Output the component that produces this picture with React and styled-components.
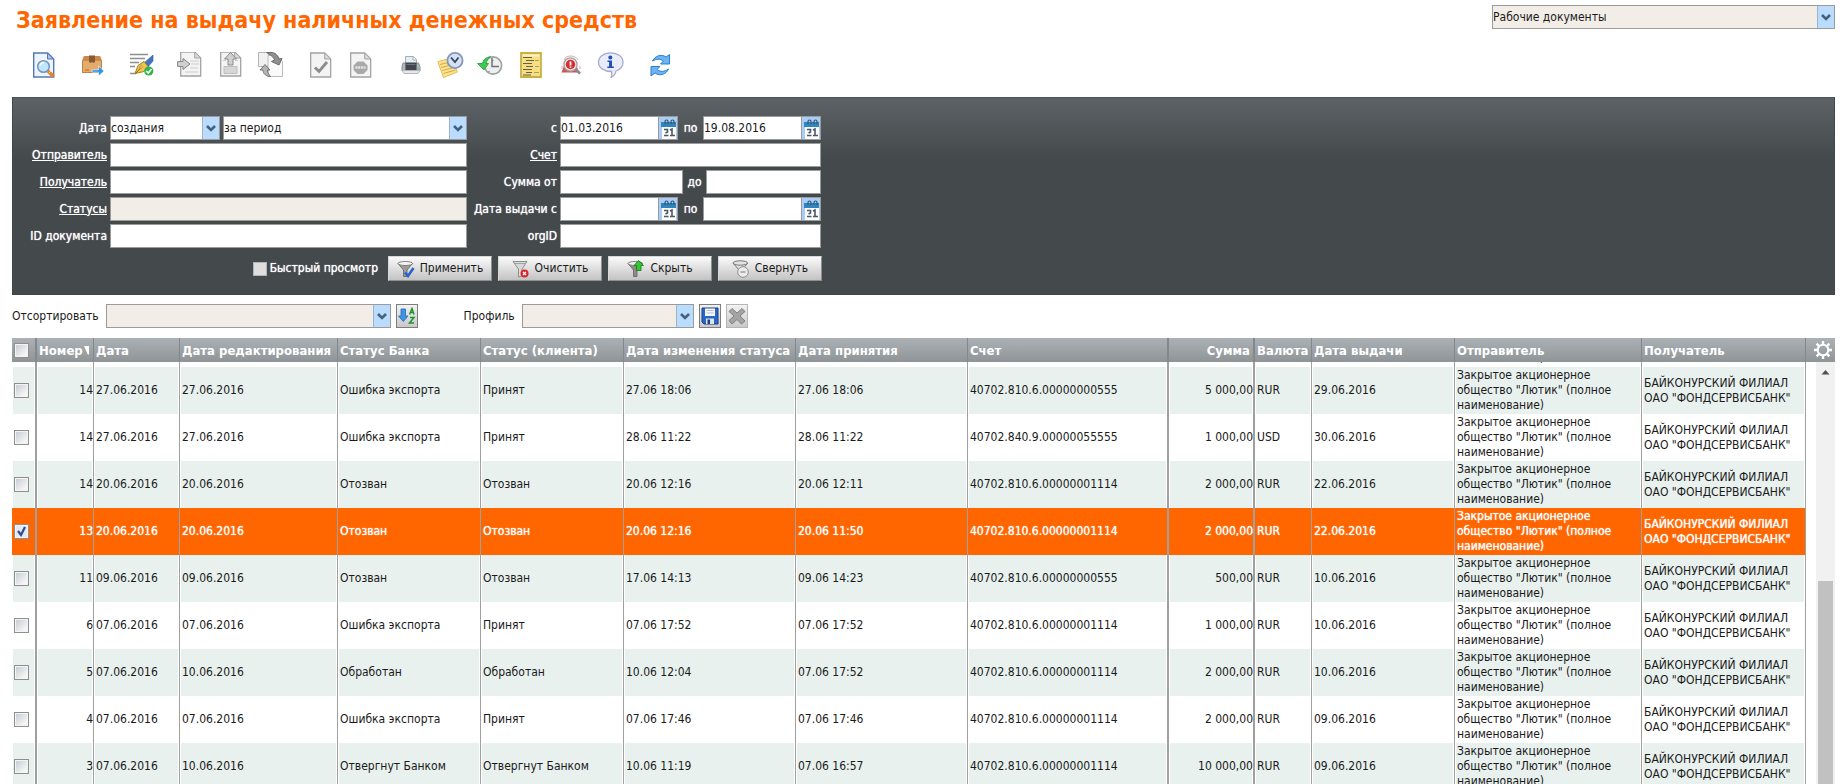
import React, {useState, useRef, useLayoutEffect} from 'react'
import styled, {createGlobalStyle} from 'styled-components';

const columns = [
    {title: 'Номер', key: 'num', width: 57, right: true, sorted: true},
    {title: 'Дата', key: 'date', width: 86},
    {title: 'Дата редактирования', key: 'edited', width: 158},
    {title: 'Статус Банка', key: 'bank', width: 143},
    {title: 'Статус (клиента)', key: 'client', width: 143},
    {title: 'Дата изменения статуса', key: 'changed', width: 172},
    {title: 'Дата принятия', key: 'accepted', width: 172},
    {title: 'Счет', key: 'account', width: 201, wide: true},
    {title: 'Сумма', key: 'sum', width: 86, right: true, wide: true},
    {title: 'Валюта', key: 'currency', width: 57},
    {title: 'Дата выдачи', key: 'issued', width: 143},
    {title: 'Отправитель', key: 'sender', width: 187},
    {title: 'Получатель', key: 'receiver', width: 164},
];

const sender = 'Закрытое акционерное общество "Лютик" (полное наименование)';
const receiver = 'БАЙКОНУРСКИЙ ФИЛИАЛ ОАО "ФОНДСЕРВИСБАНК"';

const documents = [
    ['', '', '', '', '', '', '', '', '', '', '', sender, ''],
    ['14', '27.06.2016', '27.06.2016', 'Ошибка экспорта', 'Принят', '27.06 18:06', '27.06 18:06', '40702.810.6.00000000555', '5 000,00', 'RUR', '29.06.2016', sender, receiver],
    ['14', '27.06.2016', '27.06.2016', 'Ошибка экспорта', 'Принят', '28.06 11:22', '28.06 11:22', '40702.840.9.00000055555', '1 000,00', 'USD', '30.06.2016', sender, receiver],
    ['14', '20.06.2016', '20.06.2016', 'Отозван', 'Отозван', '20.06 12:16', '20.06 12:11', '40702.810.6.00000001114', '2 000,00', 'RUR', '22.06.2016', sender, receiver],
    ['13', '20.06.2016', '20.06.2016', 'Отозван', 'Отозван', '20.06 12:16', '20.06 11:50', '40702.810.6.00000001114', '2 000,00', 'RUR', '22.06.2016', sender, receiver],
    ['11', '09.06.2016', '09.06.2016', 'Отозван', 'Отозван', '17.06 14:13', '09.06 14:23', '40702.810.6.00000000555', '500,00', 'RUR', '10.06.2016', sender, receiver],
    ['6', '07.06.2016', '07.06.2016', 'Ошибка экспорта', 'Принят', '07.06 17:52', '07.06 17:52', '40702.810.6.00000001114', '1 000,00', 'RUR', '10.06.2016', sender, receiver],
    ['5', '07.06.2016', '10.06.2016', 'Обработан', 'Обработан', '10.06 12:04', '07.06 17:52', '40702.810.6.00000001114', '2 000,00', 'RUR', '10.06.2016', sender, receiver],
    ['4', '07.06.2016', '07.06.2016', 'Ошибка экспорта', 'Принят', '07.06 17:46', '07.06 17:46', '40702.810.6.00000001114', '2 000,00', 'RUR', '09.06.2016', sender, receiver],
    ['3', '07.06.2016', '10.06.2016', 'Отвергнут Банком', 'Отвергнут Банком', '10.06 11:19', '07.06 16:57', '40702.810.6.00000001114', '10 000,00', 'RUR', '09.06.2016', sender, receiver],
];

/* icons */

const Page = ({fill = '#f4f4f4', stroke = '#a3a3a3', x = 3}) => (
    <g transform={`translate(${x} 0)`}>
        <path d="M.7 1h14l6 6v18H.7z" fill={fill} stroke={stroke} strokeWidth="1.3"/>
        <path d="M14.7 1v6h6z" fill="#dcdcdc" stroke={stroke}/>
    </g>
);

const PreviewArt = () => (
    <g>
        <path d="M6.7 1h14l6 6v18h-20z" fill="#eef4fd" stroke="#5578b0" strokeWidth="1.4"/>
        <path d="M20.5 1v6h6z" fill="#a9c4ee" stroke="#5578b0"/>
        <path d="M21 19l5.500 5.500" stroke="#e8812c" strokeWidth="3.500"/>
        <path d="M22 21l2-2" stroke="#fbe3a0" strokeWidth="1"/>
        <circle cx="16.500" cy="14.500" r="5.800" fill="#bfe6fa" stroke="#7196bd" strokeWidth="1.500"/>
        <path d="M13 13.500a4 4 0 0 1 4-3" stroke="#fff" strokeWidth="1.500" fill="none"/>
    </g>
);

const BoxArt = () => (
    <g>
        <path d="M7 4h16l2 5v12H5V9z" fill="#e5ab6b"/>
        <path d="M7 4h16l2 5H5z" fill="#c98a4b"/>
        <path d="M5.500 9v11.500h19V9" fill="none" stroke="#bd8148"/>
        <path d="M12 3.500h6V10l-1.500 1-1.500-1-1.500 1L12 10z" fill="#8a5a30"/>
        <path d="M8 18h4" stroke="#a8703a"/>
        <path d="M15 17.800h6.500v-3.800l5.500 5-5.500 5V20.200H15z" fill="#2f95e3" stroke="#fff" strokeWidth=".6"/>
    </g>
);

const SignArt = () => (
    <g>
        <path d="M3 2.500h18M3 6.500h15M3 10.500h9M3 14.500h5M3 21.500h6" stroke="#8e8e8e" strokeWidth="1.300"/>
        <path d="M17 11L26 3v6l-6 7z" fill="#4573c4" stroke="#34579c" strokeWidth=".6"/>
        <path d="M8 21.500l3-8 6-4 4 5-4 5z" fill="#f3c34b" stroke="#a8821d"/>
        <path d="M8.500 21.500l5.500-6" stroke="#8a6914"/>
        <circle cx="14" cy="15" r="1.200" fill="#fff6cf" stroke="#8a6914" strokeWidth=".6"/>
        <circle cx="21.800" cy="19" r="4.600" fill="#2fb64a"/>
        <path d="M19.200 19l2 2 3.400-4" stroke="#fff" strokeWidth="1.600" fill="none"/>
    </g>
);

const ImportArt = () => (
    <g>
        <g transform="translate(0 -1)"><Page x={3}/></g>
        <path d="M13 9h9M14 12h8M13 16h8M8 20h13" stroke="#cdcdcd"/>
        <path d="M.6 9.500h5.400V6.500L13 12l-7 5.500v-3H.6z" fill="#cfcfcf" stroke="#878787"/>
    </g>
);

const ExportArt = () => (
    <g>
        <g transform="translate(0 -1)"><Page x={3}/></g>
        <path d="M7 14.500h13v7H7z" fill="#d6d6d6" stroke="#bdbdbd"/>
        <path d="M6 8.500h3M18 8.500h3" stroke="#cdcdcd"/>
        <path d="M13.500.500l6 6.500h-3.500v6h-5V7H7.500z" fill="#d0d0d0" stroke="#8a8a8a"/>
    </g>
);

const ExchangeArt = () => (
    <g>
        <path d="M1.500.500h10v14h-10z" fill="#f1f1f1" stroke="#b5b5b5"/>
        <path d="M11 3.500h9l5.500 6v15H11z" fill="#fafafa" stroke="#bcbcbc"/>
        <path d="M9.500.500h6c4 1 6 4 6 6.500l3.500-.500-3 6.500-7.500-3.500 3-1.500C17 5 13 3 9.500.500z" fill="#8f8f8f" stroke="#6c6c6c"/>
        <path d="M8 12.500l5 5.500h-2.500c0 3 1.500 4.500 3 6.500-4 0-7.500-2.500-7.500-6.500H3z" fill="#b4b4b4" stroke="#737373"/>
    </g>
);

const CheckPageArt = () => (
    <g>
        <Page/>
        <path d="M8 15.500l4 4 8-9.500" fill="none" stroke="#8b8b8b" strokeWidth="2.800"/>
    </g>
);

const StopPageArt = () => (
    <g>
        <Page/>
        <path d="M10.500 9.500h6l4 4v4.500l-4 4h-6l-4-4v-4.500z" fill="#a9a9a9"/>
        <path d="M8.500 15.500h10" stroke="#e6e6e6" strokeWidth="2.500" strokeDasharray="2 .7"/>
    </g>
);

const PrintArt = () => (
    <g>
        <path d="M8.500 4.500h8l3 3V12h-11z" fill="#e3eff2" stroke="#9fb0b6"/>
        <path d="M16 4.500v3.500h3.500" fill="#fff" stroke="#9fb0b6"/>
        <path d="M6 11h3v8H5v-4.500zM19 11h2.500l1.500 3.500V19h-4z" fill="#b3b6bd" stroke="#8b8e95"/>
        <path d="M8.500 10.500h11V18h-11z" fill="#43464d"/>
        <path d="M9.500 12.500h9" stroke="#6f727a"/>
        <path d="M5 18.500h18l-2 3H7z" fill="#e4e6e9" stroke="#b4b7bb"/>
        <path d="M20 16.500h2" stroke="#5ccf8a" strokeWidth="1.500"/>
    </g>
);

const ScheduleArt = () => (
    <g>
        <path d="M.8 9.500l14-3.500 5.500 14L6.500 25.500z" fill="#fde48d" stroke="#e3bd52"/>
        <path d="M3 12.500l12-3M4 15.500l12-3M5.200 18.500l12-3M6.500 21.500l12-3.500" stroke="#d0a94a"/>
        <circle cx="18" cy="8.500" r="7.600" fill="#d3e2f6" stroke="#8695b8" strokeWidth="1.800"/>
        <path d="M14 5.500l4 4.500 3.500-4.500" fill="none" stroke="#3c4256" strokeWidth="1.800"/>
    </g>
);

const HistoryArt = () => (
    <g>
        <circle cx="16" cy="13.500" r="8.600" fill="#eef0f0" stroke="#9aa1a3" strokeWidth="1.600"/>
        <path d="M15 6v8.500h7" fill="none" stroke="#6e7476" strokeWidth="1.500"/>
        <path d="M16 8v1M12 19v1" stroke="#6e7476"/>
        <path d="M13.500 4.500C9 5.500 6 8 5.500 11.500H.5l6.500 6.500 4.500-6.500H9c.5-2.500 2-4.500 4.500-7z" fill="#3fc953" stroke="#1f9a37" strokeWidth=".8"/>
    </g>
);

const JournalArt = () => (
    <g>
        <path d="M4 1h20v24H4z" fill="#f4df86" stroke="#cbb142" strokeWidth="1.800"/>
        <path d="M6 3.500h16" stroke="#fbf2c4" strokeWidth="2"/>
        <path d="M6 5.500h9M9 8.500h8M6 11.500h9M9 14.500h7M6 17.500h9M9 20.500h6M6 23h8" stroke="#6b6034" strokeWidth="1.100"/>
        <path d="M18 8.500h4M18 14.500h4M17 20.500h5" stroke="#b39f58"/>
    </g>
);

const AlertArt = () => (
    <g>
        <path d="M7 8c1-3 4-4 7-4s6 2 7 4M5 17v-3M23 17v-3" stroke="#c9b1b1" fill="none"/>
        <path d="M4.500 20.500l3-8h12l2 8z" fill="#c95858"/>
        <path d="M19 17.500l4 4" stroke="#8a8a8a" strokeWidth="2.600"/>
        <circle cx="13.500" cy="12.500" r="6.600" fill="#f4e4e4" stroke="#a9a0a4" strokeWidth="1.300"/>
        <circle cx="13.500" cy="12.500" r="4.700" fill="#d22f2f"/>
        <path d="M13.500 9.500v4M13.500 14.500v1.300" stroke="#fff" strokeWidth="1.800"/>
    </g>
);

const InfoArt = () => (
    <g>
        <path d="M13.500.800C21 .800 26 5 26 10.500c0 4-3 7-7 8.500-.5 3-2 5-5 6.500 1-2 1-4 .5-6C7 19.500 1.500 15.500 1.500 10.500 1.500 5 6.500.800 13.500.800z" fill="#e9ecfb" stroke="#a9aacd" strokeWidth="1.300"/>
        <circle cx="13.300" cy="5.500" r="2" fill="#1f4fb8"/>
        <path d="M10.500 8.500h4.500v6h1.800V16h-6.500v-1.500h1.800V10h-1.600z" fill="#1f4fb8"/>
    </g>
);

const RefreshArt = () => (
    <g>
        <path d="M5.500 9C8 4 14 1.500 19 5l3.500-2.500V12h-9l3-3C13 6.500 9 7 5.500 9z" fill="#6cb4f2" stroke="#2d7fcf"/>
        <path d="M21.500 17C19 22.500 13 24.500 8 21l-4 3v-9.500h9L10 17.500c3 2.500 7.500 2.500 11.500-.5z" fill="#6cb4f2" stroke="#2d7fcf"/>
    </g>
);

const toolGroups = [
    [['Просмотр', PreviewArt]],
    [['Отправить', BoxArt]],
    [['Подписать', SignArt]],
    [['Импорт', ImportArt], ['Экспорт', ExportArt], ['Обмен', ExchangeArt]],
    [['Проверить', CheckPageArt], ['Остановить', StopPageArt]],
    [['Печать', PrintArt], ['Расписание', ScheduleArt], ['История', HistoryArt], ['Журнал', JournalArt], ['Ошибки', AlertArt], ['Информация', InfoArt]],
    [['Обновить', RefreshArt]],
];

const Funnel = ({fill = '#c9c9c9'}) => (
    <g>
        <path d="M1 3.500l5.500 6.500v6.500h3.500V10l5.500-6.500z" fill={fill} stroke="#6b6b6b" strokeWidth=".9"/>
        <ellipse cx="8.300" cy="3.500" rx="7.300" ry="2" fill="#f3f3f3" stroke="#757575" strokeWidth=".9"/>
    </g>
);

const ApplyIcon = () => (
    <svg width="18" height="18" viewBox="0 0 18 18" aria-hidden="true">
        <Funnel fill="#9c9c9c"/>
        <path d="M8 12.500l3 3.500 5.500-8" fill="none" stroke="#2a63cf" strokeWidth="2.600"/>
    </svg>
);

const ClearIcon = () => (
    <svg width="18" height="18" viewBox="0 0 18 18" aria-hidden="true">
        <path d="M1 1.500h14L10 9v7l-3.500 1V9z" fill="#d9d9d9" stroke="#8f8f8f"/>
        <path d="M3 3.500h10" stroke="#a6a6a6"/>
        <circle cx="12.500" cy="13.500" r="4" fill="#d8272f"/>
        <path d="M11 12l3 3M14 12l-3 3" stroke="#fff" strokeWidth="1.200"/>
    </svg>
);

const HideIcon = () => (
    <svg width="18" height="18" viewBox="0 0 18 18" aria-hidden="true">
        <Funnel fill="#8b8b8b"/>
        <path d="M11.500.500l5 5h-2.500v5H9.500v-5H7z" fill="#35c535" stroke="#178317" strokeWidth=".9"/>
    </svg>
);

const CollapseIcon = () => (
    <svg width="18" height="18" viewBox="0 0 18 18" aria-hidden="true">
        <path d="M1 3l6 7M15.500 3L13 6.500" stroke="#777"/>
        <ellipse cx="8.300" cy="3" rx="7.300" ry="2.200" fill="#e2e2e2" stroke="#757575"/>
        <circle cx="11" cy="12" r="5.300" fill="#ececec" stroke="#8e8e8e"/>
        <path d="M8.500 12h5" stroke="#8e8e8e" strokeWidth="1.300"/>
    </svg>
);

const CalendarIcon = () => (
    <svg width="18" height="22" viewBox="0 0 18 22" aria-hidden="true">
        <path d="M0 0h18v22H0z" fill="#a9cdf6"/>
        <path d="M3 5h14v17H3z" fill="#fdfdfd"/>
        <path d="M2 5h15v5H2z" fill="#2f86bf"/>
        <path d="M6 7V4.500a1.500 1.500 0 0 1 3 0V7M12 7V4.500a1.500 1.500 0 0 1 3 0V7" fill="none" stroke="#38536e" strokeWidth="1.200"/>
        <path d="M5 12.500h3.500V15L6.500 16M5 18.500h4.500M11 13l2-1v6M11 18.500h5" fill="none" stroke="#4d5866" strokeWidth="1.600"/>
    </svg>
);

const SortIcon = () => (
    <svg width="18" height="18" viewBox="0 0 18 18" aria-hidden="true">
        <path d="M3 2h4.500v7H10l-4.700 5.500L.500 9H3z" fill="#3f94e4" stroke="#1f66b8" strokeWidth=".8"/>
        <path d="M11.500 7.500L14 1.500l2 6M12.300 5.500h3.500M12 10.500h4l-4.500 5.500h4.500" fill="none" stroke="#1e9430" strokeWidth="1.500"/>
    </svg>
);

const SaveIcon = () => (
    <svg width="18" height="18" viewBox="0 0 18 18" aria-hidden="true">
        <path d="M1 1h16v16H3l-2-2z" fill="#2c66c4" stroke="#173f8a"/>
        <path d="M4 1.500h10V9H4z" fill="#f4f6f8"/>
        <path d="M5.500 3.500h7M5.500 6h7" stroke="#b9bfc6"/>
        <path d="M5 11.500h8V17H5z" fill="#dde3ea"/>
        <path d="M6.500 12.500h2.500V17H6.500z" fill="#1c3f80"/>
    </svg>
);

const DeleteIcon = () => (
    <svg width="18" height="18" viewBox="0 0 18 18" aria-hidden="true">
        <path d="M4 1.500L9 6l5-4.500L17 4.500 12 9l5 5-3.500 3L9 12.500 4 17l-3-3.500L6 9 1 4.500z" fill="#a3a3a3" stroke="#828282"/>
    </svg>
);

const GearIcon = () => (
    <svg width="20" height="20" viewBox="0 0 20 20" aria-hidden="true">
        <circle cx="10" cy="10" r="5.300" fill="none" stroke="#fff" strokeWidth="2"/>
        <path d="M10 1v3M10 16v3M1 10h3M16 10h3M3.600 3.600l2.200 2.200M14.200 14.200l2.200 2.200M3.600 16.400l2.200-2.200M14.200 5.800l2.200-2.200" stroke="#fff" strokeWidth="2.400"/>
    </svg>
);

const ArrowIcon = () => (
    <svg width="16" height="22" viewBox="0 0 16 22" aria-hidden="true">
        <path d="M4 9l4 4 4-4" fill="none" stroke="#44617f" strokeWidth="2.600"/>
    </svg>
);

const SortMark = () => (
    <svg width="5" height="9" viewBox="0 0 5 9" aria-hidden="true">
        <path d="M0 0h5v8l-1 1z" fill="#fff"/>
    </svg>
);

/* controls */

const Combo = ({id, label, value, muted, grow, width}) => (
    <ComboFrame $muted={muted} $grow={grow} $width={width}>
        <ComboSelect id={id} aria-label={label} defaultValue={value}>
            <option>{value}</option>
        </ComboSelect>
        <ComboArrow><ArrowIcon/></ComboArrow>
    </ComboFrame>
);

const DateField = ({id, label, value = ''}) => (
    <DateFrame>
        <DateInput id={id} aria-label={label} defaultValue={value}/>
        <CalendarButton type="button" aria-label="Календарь"><CalendarIcon/></CalendarButton>
    </DateFrame>
);

const Lookup = ({id, children}) => (
    <Label htmlFor={id}><LookupLink href="#">{children}</LookupLink></Label>
);

const Filters = () => (
    <Panel>
        <FilterGrid>
            <Label htmlFor="dateKind">Дата</Label>
            <Cell>
                <Combo id="dateKind" value="создания" width={110}/>
                <Combo label="Период" value="за период" grow/>
            </Cell>
            <Label htmlFor="dateFrom">с</Label>
            <Cell>
                <DateField id="dateFrom" value="01.03.2016"/>
                <Between htmlFor="dateTo">по</Between>
                <DateField id="dateTo" value="19.08.2016"/>
            </Cell>

            <Lookup id="sender">Отправитель</Lookup>
            <TextInput id="sender"/>
            <Lookup id="account">Счет</Lookup>
            <TextInput id="account"/>

            <Lookup id="receiver">Получатель</Lookup>
            <TextInput id="receiver"/>
            <Label htmlFor="sumFrom">Сумма от</Label>
            <Cell>
                <TextInput id="sumFrom" $width={123}/>
                <Between htmlFor="sumTo" $tight>до</Between>
                <TextInput id="sumTo"/>
            </Cell>

            <Lookup id="statuses">Статусы</Lookup>
            <TextInput id="statuses" $muted readOnly/>
            <Label htmlFor="issueFrom">Дата выдачи с</Label>
            <Cell>
                <DateField id="issueFrom"/>
                <Between htmlFor="issueTo">по</Between>
                <DateField id="issueTo"/>
            </Cell>

            <Label htmlFor="docId">ID документа</Label>
            <TextInput id="docId"/>
            <Label htmlFor="orgId">orgID</Label>
            <TextInput id="orgId"/>
        </FilterGrid>
        <Actions>
            <QuickView>
                <QuickCheck type="checkbox"/>
                Быстрый просмотр
            </QuickView>
            <ActionButton type="button"><ApplyIcon/>Применить</ActionButton>
            <ActionButton type="button"><ClearIcon/>Очистить</ActionButton>
            <ActionButton type="button"><HideIcon/>Скрыть</ActionButton>
            <ActionButton type="button"><CollapseIcon/>Свернуть</ActionButton>
        </Actions>
    </Panel>
);

const Columns = () => (
    <colgroup>
        <Col $width={25}/>
        {columns.map((c) => <Col key={c.key} $width={c.width}/>)}
    </colgroup>
);

const Documents = () => {
    const [checked, setChecked] = useState({4: true});
    const scroller = useRef(null);

    const toggle = (i) => {
        setChecked({...checked, [i]: !checked[i]});
    }

    useLayoutEffect(() => {
        scroller.current.scrollTop = 42;
    },[]);

    return (
        <TableArea>
            <Grid>
                <Table>
                    <Columns/>
                    <thead>
                        <tr>
                            <HeadCell $wide><Check type="checkbox" aria-label="Выбрать все"/></HeadCell>
                            {columns.map((c) => (
                                <HeadCell key={c.key} $right={c.right && !c.sorted} $wide={c.wide}>
                                    {c.title}{c.sorted && <SortMark/>}
                                </HeadCell>
                            ))}
                        </tr>
                    </thead>
                </Table>
                <Scroller ref={scroller}>
                    <Table>
                        <Columns/>
                        <tbody>
                            {documents.map((doc, i) => (
                                <Row key={i} $even={i%2 === 1} $selected={checked[i]}>
                                    <BodyCell $wide>
                                        <Check type="checkbox" aria-label={`Документ ${doc[0]}`} checked={!!checked[i]} onChange={() => toggle(i)}/>
                                    </BodyCell>
                                    {doc.map((text, n) => (
                                        <BodyCell key={n} $right={columns[n].right} $wide={columns[n].wide}>{text}</BodyCell>
                                    ))}
                                </Row>
                            ))}
                        </tbody>
                    </Table>
                </Scroller>
            </Grid>
            <Side>
                <GearButton type="button" aria-label="Настройки"><GearIcon/></GearButton>
                <Track>
                    <svg width="19" height="20" viewBox="0 0 19 20" aria-hidden="true">
                        <path d="M5.500 12.500l4-4.500 4 4.500z" fill="#505050"/>
                    </svg>
                    <Spacer/>
                    <Thumb/>
                </Track>
            </Side>
        </TableArea>
    );
}

const App = () => (
    <Main>
        <GlobalStyle/>
        <Top>
            <Title>Заявление на выдачу наличных денежных средств</Title>
            <Combo label="Папка" value="Рабочие документы" muted width={343}/>
        </Top>
        <Toolbar>
            {toolGroups.map((group, i) => (
                <ToolGroup key={i}>
                    {group.map(([name, Art]) => (
                        <ToolButton key={name} type="button" aria-label={name}>
                            <svg width="28" height="26" viewBox="0 0 28 26" fill="none"><Art/></svg>
                        </ToolButton>
                    ))}
                </ToolGroup>
            ))}
        </Toolbar>
        <Filters/>
        <SortBar>
            <SortGroup>
                <label htmlFor="sort">Отсортировать</label>
                <Combo id="sort" value="" muted width={285}/>
                <SquareButton type="button" aria-label="Порядок"><SortIcon/></SquareButton>
            </SortGroup>
            <SortGroup>
                <label htmlFor="profile">Профиль</label>
                <Combo id="profile" value="" muted width={172}/>
                <SquareButton type="button" aria-label="Сохранить"><SaveIcon/></SquareButton>
                <SquareButton type="button" aria-label="Удалить" $off><DeleteIcon/></SquareButton>
            </SortGroup>
        </SortBar>
        <Documents/>
    </Main>
);

const GlobalStyle = createGlobalStyle`
    * {
        box-sizing: border-box;
    }
    body {
        margin: 0;
        background: #fff;
    }
    body, button, input, select {
        font-family: Tahoma, "DejaVu Sans Condensed", "DejaVu Sans", sans-serif;
        font-size: 12px;
        line-height: 15px;
        color: #1a1a1a;
    }
    svg {
        display: block;
        flex: none;
    }
`
const Main = styled.div`
    display: flex;
    flex-direction: column;
    height: 100vh;
    padding: 0 12px;
    overflow: hidden;
`
const Top = styled.header`
    display: flex;
    justify-content: space-between;
    align-items: flex-start;
    padding: 5px 0 0 4px;
`
const Title = styled.h1`
    margin: 0;
    padding-top: 2px;
    font-size: 23px;
    line-height: 26px;
    font-weight: bold;
    color: #ff6600;
`
const Toolbar = styled.nav`
    display: flex;
    gap: 10px;
    padding: 19px 0 19px 9px;
`
const ToolGroup = styled.div`
    display: flex;
`
const ToolButton = styled.button`
    display: flex;
    justify-content: center;
    width: 40px;
    height: 26px;
    padding: 0;
    border: 0;
    background: none;
`
const Panel = styled.form`
    padding: 18px 0 13px;
    border: 1px solid #3f4548;
    border-top-color: #4c5256;
    background: linear-gradient(#5d6266, #44494c 60px);
    color: #fff;
`
const FilterGrid = styled.div`
    display: grid;
    grid-template-columns: 94px 357px 87px 261px;
    column-gap: 3px;
    row-gap: 3px;
    align-items: center;
`
const Label = styled.label`
    text-align: right;
    white-space: nowrap;
    color: #fff;
    text-shadow: 0 0 1px #fff;
`
const LookupLink = styled.a`
    color: #fff;
    text-decoration: underline;
`
const Between = styled(Label)`
    flex: none;
    width: ${props => props.$tight ? 17 : 19}px;
    text-align: center;
`
const Cell = styled.div`
    display: flex;
    gap: 3px;
    align-items: center;
    min-width: 0;
`
const TextInput = styled.input`
    flex: ${props => props.$width ? 'none' : 1};
    width: ${props => props.$width ? props.$width+'px' : '100%'};
    min-width: 0;
    height: 24px;
    padding: 0 1px;
    border: 1px solid #9b9b9b;
    border-radius: 0;
    background: ${props => props.$muted ? '#f2eee7' : '#fff'};
`
const ComboFrame = styled.div`
    display: flex;
    flex: ${props => props.$grow ? 1 : 'none'};
    width: ${props => props.$width ? props.$width+'px' : 'auto'};
    height: 24px;
    border: 1px solid #9b9b9b;
    background: ${props => props.$muted ? '#f2eee7' : '#fff'};
`
const ComboSelect = styled.select`
    flex: 1;
    min-width: 0;
    padding: 0;
    border: 0;
    appearance: none;
    background: none;
`
const ComboArrow = styled.span`
    flex: none;
    border-left: 1px solid #9fb4cc;
    background: #b9dcff;
    pointer-events: none;
`
const DateFrame = styled.div`
    display: flex;
    flex: 1;
    min-width: 0;
    height: 24px;
    border: 1px solid #9b9b9b;
    background: #fff;
`
const DateInput = styled.input`
    flex: 1;
    min-width: 0;
    padding: 0;
    border: 0;
    background: none;
`
const CalendarButton = styled.button`
    padding: 0;
    border: 0;
    border-left: 1px solid #9b9b9b;
    background: none;
`
const Actions = styled.div`
    display: flex;
    align-items: center;
    justify-content: flex-end;
    gap: 6px;
    width: 809px;
    padding-top: 8px;
`
const QuickView = styled.label`
    display: flex;
    align-items: center;
    gap: 3px;
    margin-right: 4px;
    text-shadow: 0 0 1px #fff;
`
const QuickCheck = styled.input`
    appearance: none;
    width: 14px;
    height: 14px;
    margin: 0;
    border: 1px solid #b5b5b5;
    background: #dedede;
`
const ActionButton = styled.button`
    display: flex;
    align-items: center;
    justify-content: center;
    gap: 5px;
    width: 104px;
    height: 25px;
    padding: 0;
    border: 1px solid #8f8f8f;
    border-top-color: #d8d8d8;
    border-left-color: #d8d8d8;
    background: linear-gradient(#fafafa, #c3c3c3);
`
const SortBar = styled.div`
    display: flex;
    gap: 46px;
    padding: 9px 0 10px;
`
const SortGroup = styled.div`
    display: flex;
    align-items: center;
    gap: 5px;

    label {
        margin-right: 2px;
    }
`
const SquareButton = styled.button`
    display: flex;
    align-items: center;
    justify-content: center;
    width: 22px;
    height: 24px;
    padding: 0;
    border: 1px solid ${props => props.$off ? '#b5b5b5' : '#7d7d7d'};
    background: linear-gradient(#f2f2f2, #c9c9c9);
`
const TableArea = styled.main`
    display: flex;
    flex: 1;
    min-height: 0;
`
const Grid = styled.div`
    display: flex;
    flex: 1;
    flex-direction: column;
    min-width: 0;
`
const Scroller = styled.div`
    flex: 1;
    min-height: 0;
    overflow-y: auto;
    scrollbar-width: none;
`
const Table = styled.table`
    width: 100%;
    table-layout: fixed;
    border-collapse: separate;
    border-spacing: 0;
`
const Col = styled.col`
    width: ${props => props.$width}px;
`
const HeadCell = styled.th`
    height: 24px;
    padding: 0 ${props => props.$right ? 3 : 0}px 0 2px;
    border-right: ${props => props.$wide ? 2 : 1}px solid #83888b;
    background: linear-gradient(#acb1b5, #8f9497);
    color: #fff;
    font-size: 13px;
    font-weight: bold;
    white-space: nowrap;
    text-align: ${props => props.$right ? 'right' : 'left'};

    svg {
        display: inline-block;
        margin-left: 1px;
    }
`
const Row = styled.tr`
    background: ${props => props.$selected ? '#ff6600' : props.$even ? '#e8f1ee' : '#fff'};
    color: ${props => props.$selected ? '#fff' : 'inherit'};

    td {
        box-shadow: ${props => props.$selected ? 'none' : 'inset 1px 0 #fff, inset -1px 0 #fff'};
        text-shadow: ${props => props.$selected ? '0 0 1px #fff' : 'none'};
    }
`
const BodyCell = styled.td`
    height: 47px;
    padding: 1px 0 1px 2px;
    border-right: ${props => props.$wide ? 2 : 1}px solid #a0a0a0;
    text-align: ${props => props.$right ? 'right' : 'left'};
`
const Check = styled.input`
    appearance: none;
    display: block;
    width: 15px;
    height: 15px;
    margin: 0;
    border: 1px solid #8e8f8f;
    outline: 1px solid #f4f4f4;
    outline-offset: -2px;
    background: linear-gradient(135deg, #c4c9d0, #f6f6f6 80%);

    &:checked {
        background: url("data:image/svg+xml,%3Csvg xmlns='http://www.w3.org/2000/svg' viewBox='0 0 13 13'%3E%3Cpath d='M3 6l3 4 4-8' fill='none' stroke='%232f4a8f' stroke-width='2.200'/%3E%3C/svg%3E") #e4e8f2;
    }
`
const Side = styled.div`
    display: flex;
    flex-direction: column;
    width: 29px;
`
const GearButton = styled.button`
    display: flex;
    align-items: center;
    justify-content: flex-end;
    height: 24px;
    padding: 0 2px;
    border: 0;
    background: linear-gradient(#acb1b5, #8f9497);
`
const Track = styled.div`
    display: flex;
    flex: 1;
    flex-direction: column;
    align-items: center;
    margin-left: 10px;
    background: #f1f1f1;
`
const Spacer = styled.div`
    flex: 199;
`
const Thumb = styled.div`
    flex: 204;
    width: 15px;
    background: #c1c1c1;
`

export default App
